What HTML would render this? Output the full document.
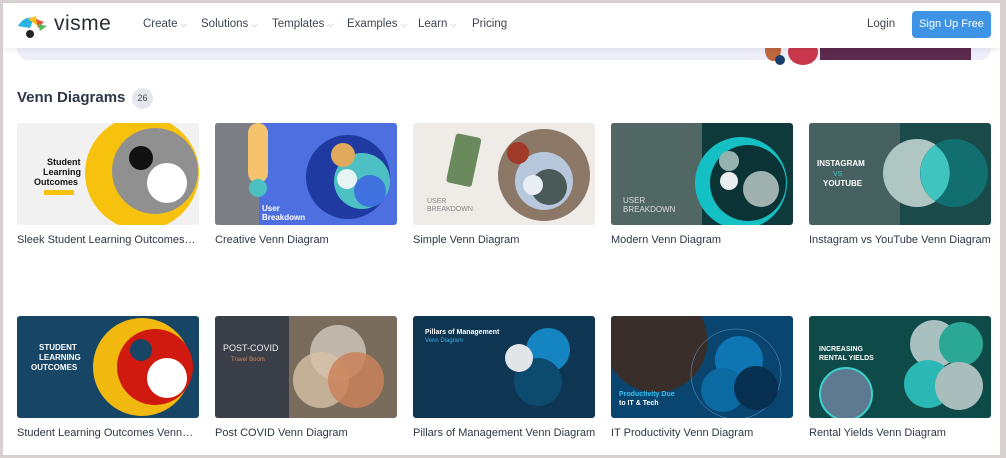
<!DOCTYPE html>
<html><head><meta charset="utf-8"><style>
*{margin:0;padding:0;box-sizing:border-box}
body{width:1006px;height:458px;overflow:hidden;background:#d8cfd0;font-family:"Liberation Sans",sans-serif;position:relative}
#page{position:absolute;left:3px;top:3px;width:997px;height:452px;background:#fff;overflow:hidden}
.nav{position:absolute;left:0;top:0;width:997px;height:45px;background:#fff;box-shadow:0 2px 6px rgba(0,0,0,.08);z-index:3}
.nav .it{position:absolute;top:15px;font-size:11.5px;color:#3d4350}
.nav .it small{font-size:8px;color:#aaa;margin-left:3px}
.banner{position:absolute;left:14px;top:40px;width:974px;height:17px;background:#eeeefb;border-radius:0 0 12px 12px;z-index:1}
h2{position:absolute;left:14px;top:86px;font-size:15px;font-weight:bold;color:#2d3646}
.badge{position:absolute;left:129px;top:85px;width:21px;height:21px;border-radius:50%;background:#e4e7ee;font-size:9px;color:#444;text-align:center;line-height:21px}
.card{position:absolute;width:182px}
.card svg{display:block;width:182px;height:102px;border-radius:3px}
.card p{margin-top:9px;font-size:11px;color:#2d3646;white-space:nowrap}
</style></head><body><div id="page">
<div class="nav">
 <svg style="position:absolute;left:13px;top:11px" width="36" height="28" viewBox="0 0 36 28"><path d="M2 12 Q8 2 18 4 L14 14 Z" fill="#2ab3e6"/><path d="M12 5 L20 2 L22 12 Z" fill="#f5c316"/><path d="M20 5 L28 8 L22 14 Z" fill="#e8543d"/><path d="M22 10 L31 12 L24 17Z" fill="#5cb85c"/><circle cx="14" cy="20" r="4" fill="#222"/></svg>
 <div style="position:absolute;left:51px;top:9px;font-size:21px;color:#2a2d35;letter-spacing:.5px">visme</div>
 <div class="it" style="left:140px">Create<small>⌵</small></div>
 <div class="it" style="left:198px">Solutions<small>⌵</small></div>
 <div class="it" style="left:269px">Templates<small>⌵</small></div>
 <div class="it" style="left:344px">Examples<small>⌵</small></div>
 <div class="it" style="left:415px">Learn<small>⌵</small></div>
 <div class="it" style="left:469px">Pricing</div>
 <div class="it" style="left:864px">Login</div>
 <div style="position:absolute;left:909px;top:8px;width:79px;height:27px;background:#3f93e5;border-radius:4px;color:#fff;font-size:11px;text-align:center;line-height:27px">Sign Up Free</div>
</div>
<div class="banner"></div>
<div style="position:absolute;left:817px;top:40px;width:151px;height:17px;background:#5c2a4c;z-index:2"></div>
<div style="position:absolute;left:762px;top:36px;width:16px;height:22px;background:#c0673e;border-radius:50%;z-index:2"></div>
<div style="position:absolute;left:785px;top:36px;width:30px;height:26px;background:#c9384a;border-radius:50%;z-index:2"></div>
<div style="position:absolute;left:772px;top:52px;width:10px;height:10px;background:#1c3d6b;border-radius:50%;z-index:3"></div>
<h2>Venn Diagrams</h2><div class="badge">26</div>

<div class="card" style="left:14px;top:120px"><svg viewBox="0 0 182 102"><rect width="182" height="102" fill="#f1f1f1"/><circle cx="125" cy="50" r="57" fill="#f6c20d"/><circle cx="138" cy="48" r="43" fill="#909090"/><circle cx="124" cy="35" r="12" fill="#111"/><circle cx="150" cy="60" r="20" fill="#fff"/><text x="30" y="42" font-size="9" font-weight="bold" fill="#111">Student</text><text x="26" y="52" font-size="9" font-weight="bold" fill="#111">Learning</text><text x="17" y="62" font-size="9" font-weight="bold" fill="#111">Outcomes</text><rect x="27" y="67" width="30" height="5" fill="#f6c20d"/></svg><p>Sleek Student Learning Outcomes…</p></div>
<div class="card" style="left:212px;top:120px"><svg viewBox="0 0 182 102"><rect width="182" height="102" fill="#4d6fdf"/><rect width="44" height="102" fill="#7c7f86"/><rect x="33" width="20" height="60" rx="10" fill="#f5c36e"/><circle cx="43" cy="65" r="9" fill="#4cc0c3"/><circle cx="133" cy="54" r="42" fill="#1f3aa0"/><circle cx="147" cy="58" r="28" fill="#4cc0c3"/><circle cx="128" cy="32" r="12" fill="#e0a95b"/><circle cx="155" cy="68" r="16" fill="#3f72de"/><circle cx="132" cy="56" r="10" fill="#e6f4f4"/><text x="47" y="88" font-size="8" font-weight="bold" fill="#fff">User</text><text x="47" y="97" font-size="8" font-weight="bold" fill="#fff">Breakdown</text></svg><p>Creative Venn Diagram</p></div>
<div class="card" style="left:410px;top:120px"><svg viewBox="0 0 182 102"><rect width="182" height="102" fill="#efebe7"/><rect x="38" y="12" width="26" height="50" rx="3" fill="#6a8a5e" transform="rotate(12 50 36)"/><circle cx="131" cy="52" r="46" fill="#8c7866"/><circle cx="131" cy="58" r="29" fill="#b8c8dc"/><circle cx="105" cy="30" r="11" fill="#a13a28"/><circle cx="136" cy="64" r="18" fill="#4a5a58"/><circle cx="120" cy="62" r="10" fill="#e8eef4"/><text x="14" y="80" font-size="7" fill="#888">USER</text><text x="14" y="88" font-size="7" fill="#888">BREAKDOWN</text></svg><p>Simple Venn Diagram</p></div>
<div class="card" style="left:608px;top:120px"><svg viewBox="0 0 182 102"><rect width="182" height="102" fill="#0f3a3b"/><rect width="91" height="102" fill="#506764"/><circle cx="130" cy="60" r="46" fill="#15c0c4"/><circle cx="137" cy="60" r="38" fill="#0b3336"/><circle cx="118" cy="38" r="10" fill="#97b3b1"/><circle cx="150" cy="66" r="18" fill="#9fb2b0"/><circle cx="118" cy="58" r="9" fill="#e8eeee"/><text x="12" y="80" font-size="8" fill="#ddd">USER</text><text x="12" y="89" font-size="8" fill="#ddd">BREAKDOWN</text></svg><p>Modern Venn Diagram</p></div>
<div class="card" style="left:806px;top:120px"><svg viewBox="0 0 182 102"><rect width="182" height="102" fill="#1a4a4a"/><rect width="91" height="102" fill="#476160"/><circle cx="108" cy="50" r="34" fill="#b0c6c3"/><circle cx="145" cy="50" r="34" fill="#11706f"/><path d="M126 22 A34 34 0 0 1 126 78 A34 34 0 0 1 126 22Z" fill="#3fc4c0"/><text x="8" y="43" font-size="8" font-weight="bold" fill="#fff">INSTAGRAM</text><text x="24" y="53" font-size="7" fill="#3fc4c0">VS</text><text x="14" y="63" font-size="8" font-weight="bold" fill="#fff">YOUTUBE</text></svg><p>Instagram vs YouTube Venn Diagram</p></div>

<div class="card" style="left:14px;top:313px"><svg viewBox="0 0 182 102"><rect width="182" height="102" fill="#174566"/><circle cx="125" cy="51" r="49" fill="#f1b80f"/><circle cx="138" cy="51" r="38" fill="#d0190f"/><circle cx="124" cy="34" r="11" fill="#174566"/><circle cx="150" cy="62" r="20" fill="#fff"/><text x="22" y="34" font-size="8" font-weight="bold" fill="#fff">STUDENT</text><text x="22" y="44" font-size="8" font-weight="bold" fill="#fff">LEARNING</text><text x="14" y="54" font-size="8" font-weight="bold" fill="#fff">OUTCOMES</text></svg><p>Student Learning Outcomes Venn…</p></div>
<div class="card" style="left:212px;top:313px"><svg viewBox="0 0 182 102"><rect width="182" height="102" fill="#7a6c5d"/><rect width="74" height="102" fill="#3a3f48"/><circle cx="123" cy="37" r="28" fill="#c8bfb3" opacity=".9"/><circle cx="106" cy="64" r="28" fill="#d7c2a6" opacity=".8"/><circle cx="141" cy="64" r="28" fill="#c9825a" opacity=".85"/><text x="8" y="35" font-size="9" fill="#eee">POST-COVID</text><text x="16" y="45" font-size="6" fill="#d08a60">Travel Boom</text></svg><p>Post COVID Venn Diagram</p></div>
<div class="card" style="left:410px;top:313px"><svg viewBox="0 0 182 102"><rect width="182" height="102" fill="#0e3552"/><circle cx="135" cy="34" r="22" fill="#1485c0"/><circle cx="125" cy="66" r="24" fill="#0c4a6e"/><circle cx="106" cy="42" r="14" fill="#e1e5e8"/><text x="12" y="18" font-size="7" font-weight="bold" fill="#fff">Pillars of Management</text><text x="12" y="26" font-size="6" fill="#3db0e0">Venn Diagram</text></svg><p>Pillars of Management Venn Diagram</p></div>
<div class="card" style="left:608px;top:313px"><svg viewBox="0 0 182 102"><rect width="182" height="102" fill="#0a4570"/><path d="M0 0 H90 A45 45 0 0 1 0 50Z" fill="#3a2e2a"/><circle cx="125" cy="58" r="45" fill="none" stroke="#5fa0c8" stroke-width=".5"/><circle cx="128" cy="44" r="24" fill="#0d76b3"/><circle cx="112" cy="74" r="22" fill="#0b6aa1"/><circle cx="145" cy="72" r="22" fill="#072f50"/><text x="8" y="80" font-size="7" font-weight="bold" fill="#3cc0ee">Productivity Due</text><text x="8" y="89" font-size="7" font-weight="bold" fill="#fff">to IT &amp; Tech</text></svg><p>IT Productivity Venn Diagram</p></div>
<div class="card" style="left:806px;top:313px"><svg viewBox="0 0 182 102"><rect width="182" height="102" fill="#0e4a48"/><circle cx="125" cy="28" r="24" fill="#a8c1bf"/><circle cx="152" cy="28" r="22" fill="#2aa895"/><circle cx="119" cy="68" r="24" fill="#2bb7b3"/><circle cx="150" cy="70" r="24" fill="#a9bdbc"/><circle cx="37" cy="78" r="26" fill="#5d7a90" stroke="#3fd0cc" stroke-width="2"/><text x="10" y="35" font-size="7" font-weight="bold" fill="#fff">INCREASING</text><text x="10" y="44" font-size="7" font-weight="bold" fill="#fff">RENTAL YIELDS</text></svg><p>Rental Yields Venn Diagram</p></div>
</div></body></html>
